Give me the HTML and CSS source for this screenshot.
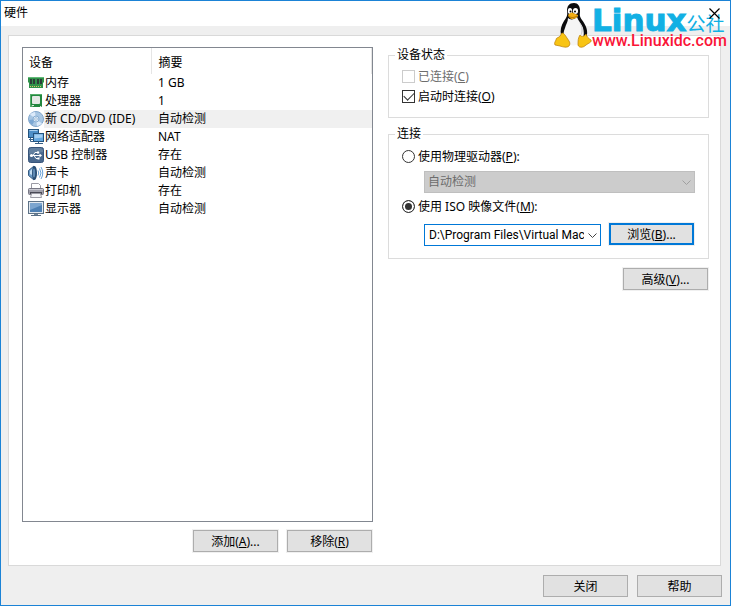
FILE: index.html
```html
<!DOCTYPE html>
<html lang="zh-CN">
<head>
  <meta charset="UTF-8">
  <meta name="viewport" content="width=device-width, initial-scale=1.0">
  <title>硬件</title>
  <link rel="stylesheet" href="styles.css">
</head>
<body>
  <div class="dialog">
    <header class="titlebar">
      <h1>硬件</h1>
      <button type="button" class="close" aria-label="关闭窗口">
        <svg width="11" height="11" viewBox="0 0 11 11"><path d="M.5 .5l10 10M10.5 .5l-10 10" stroke="#000" stroke-width="1.2"/></svg>
      </button>
    </header>

    <main class="panel">
      <section class="devices">
        <div class="list">
          <table>
            <thead>
              <tr><th class="device">设备</th><th>摘要</th></tr>
            </thead>
            <tbody>
              <tr>
                <td><div class="name">
                  <svg width="16" height="16" viewBox="0 0 16 16"><path d="M0 2h16v5l-1 1v5H1V8L0 7z" fill="#2f9149"/><path d="M0 2h16v1H0z" fill="#63b878"/><path d="M2 4h2v5H2zM5 4h2v5H5zM9 4h2v5H9zM12 4h2v5h-2z" fill="#2c3d38"/><path d="M2 11.500h12" stroke="#d9c36a" stroke-dasharray="1 1"/></svg>
                  <span>内存</span></div></td>
                <td>1 GB</td>
              </tr>
              <tr>
                <td><div class="name">
                  <svg width="16" height="16" viewBox="0 0 16 16"><rect x="2" y="1" width="12" height="13" rx="1" fill="#23873f"/><rect x="4" y="3" width="8" height="8" rx="1" fill="#e4e8e4"/><path d="M2.500 13V1.500H14" fill="none" stroke="#54ad68"/><path d="M4 13.500v-1h2M12 13.500h1" stroke="#dcebdc" fill="none"/></svg>
                  <span>处理器</span></div></td>
                <td>1</td>
              </tr>
              <tr class="selected">
                <td><div class="name">
                  <svg width="16" height="16" viewBox="0 0 16 16"><circle cx="8" cy="8" r="7.500" fill="#a9c7e4" stroke="#82a6cc"/><path d="M8 8L2 3.500A7 7 0 0 1 7 1zM8 8l6 4.500A7 7 0 0 1 9 15z" fill="#dceafa"/><path d="M8 8L1 9a7 7 0 0 0 3 5z" fill="#7ba7d4"/><circle cx="8" cy="8" r="3" fill="#d9e8f6" stroke="#88aed3"/><circle cx="8" cy="8" r="1.300" fill="#fff" stroke="#759cc4" stroke-width=".6"/></svg>
                  <span>新 CD/DVD (IDE)</span></div></td>
                <td>自动检测</td>
              </tr>
              <tr>
                <td><div class="name">
                  <svg width="16" height="16" viewBox="0 0 16 16"><rect x=".5" y=".5" width="10" height="8" fill="#4d8fc8" stroke="#24547f"/><path d="M1.500 1.500h8" stroke="#a9d0ef"/><path d="M2.500 9v3.500H6M1 10.500h4" fill="none" stroke="#3c648a"/><rect x="5.500" y="4.500" width="10" height="8" fill="#64a7df" stroke="#24547f"/><path d="M6.500 5.500h8v3l-8 1z" fill="#a3cff2"/><path d="M10.500 13v2M7 14.500h8" stroke="#375f86"/></svg>
                  <span>网络适配器</span></div></td>
                <td>NAT</td>
              </tr>
              <tr>
                <td><div class="name">
                  <svg width="16" height="16" viewBox="0 0 16 16"><rect x=".5" y=".5" width="15" height="15" rx="2" fill="#49688d" stroke="#38557a"/><path d="M1 7V3l2-2h10l2 2v2z" fill="#63809f"/><path d="M3 8.500h9M5 8.500l2-3h3M6 8.500l2 3h2" fill="none" stroke="#fff"/><circle cx="3.500" cy="8.500" r="1.600" fill="#fff"/><circle cx="10" cy="5.500" r="1.200" fill="#fff"/><path d="M9.500 10.500h2v2h-2zM11.500 6.500l2.500 2-2.500 2z" fill="#fff"/></svg>
                  <span>USB 控制器</span></div></td>
                <td>存在</td>
              </tr>
              <tr>
                <td><div class="name">
                  <svg width="16" height="16" viewBox="0 0 16 16"><path d="M.5 5.500L6 1q3 7 0 14L.5 10.500z" fill="#6d9cc8" stroke="#345a80"/><ellipse cx="6.500" cy="8" rx="2.500" ry="7" fill="#284d73"/><ellipse cx="6" cy="8" rx="1.200" ry="4.500" fill="#5f8bb5"/><path d="M2 6l2-2v6l-2-1z" fill="#c5dff3"/><path d="M10 5.500q1.500 2.500 0 5M11.500 3.500q3 4.500 0 9M13 2q3.500 6 0 12" fill="none" stroke="#6ba3d6"/></svg>
                  <span>声卡</span></div></td>
                <td>自动检测</td>
              </tr>
              <tr>
                <td><div class="name">
                  <svg width="16" height="16" viewBox="0 0 16 16"><path d="M3.500 6V.500h7l2 2V6" fill="#fff" stroke="#9b9ba4"/><rect x=".5" y="5.500" width="15" height="6" rx="1" fill="#a1a1ac" stroke="#777784"/><path d="M1 6.500h14" stroke="#cacad2"/><path d="M2 9h12v2H2z" fill="#494955"/><path d="M3.500 10.500h9l1 4h-11z" fill="#f5f5f8" stroke="#9b9ba4"/></svg>
                  <span>打印机</span></div></td>
                <td>存在</td>
              </tr>
              <tr>
                <td><div class="name">
                  <svg width="16" height="16" viewBox="0 0 16 16"><rect x=".5" y=".5" width="15" height="12" fill="#e1e8ef" stroke="#5d7287"/><path d="M2 2h12v9H2z" fill="#4e80b4"/><path d="M2 2h12v2L2 9z" fill="#7ca5cf"/><path d="M6 13h4v1H6z" fill="#70859b"/><path d="M3 14.500h10" stroke="#596f86"/></svg>
                  <span>显示器</span></div></td>
                <td>自动检测</td>
              </tr>
            </tbody>
          </table>
        </div>
        <div class="actions">
          <button type="button" class="btn">添加(<u>A</u>)...</button>
          <button type="button" class="btn">移除(<u>R</u>)</button>
        </div>
      </section>

      <form class="settings">
        <fieldset class="status">
          <legend>设备状态</legend>
          <label class="option disabled"><input type="checkbox" disabled><span>已连接(<u>C</u>)</span></label>
          <label class="option"><input type="checkbox" checked><span>启动时连接(<u>O</u>)</span></label>
        </fieldset>

        <fieldset class="connection">
          <legend>连接</legend>
          <label class="option"><input type="radio" name="source"><span>使用物理驱动器(<u>P</u>):</span></label>
          <div class="combo drive">
            <select aria-label="物理驱动器" disabled><option>自动检测</option></select>
            <svg width="9" height="6" viewBox="0 0 9 6"><path d="M.5 .5l4 4 4-4" fill="none" stroke="#a0a0a0"/></svg>
          </div>
          <label class="option"><input type="radio" name="source" checked><span>使用 ISO 映像文件(<u>M</u>):</span></label>
          <div class="iso">
            <div class="combo path">
              <select aria-label="ISO 映像文件"><option>D:\Program Files\Virtual Mac</option></select>
              <svg width="9" height="6" viewBox="0 0 9 6"><path d="M.5 .5l4 4 4-4" fill="none" stroke="#444"/></svg>
            </div>
            <button type="button" class="btn default">浏览(<u>B</u>)...</button>
          </div>
        </fieldset>
        <button type="button" class="btn advanced">高级(<u>V</u>)...</button>
      </form>
    </main>

    <footer class="footer">
      <button type="button" class="btn">关闭</button>
      <button type="button" class="btn">帮助</button>
    </footer>

    <div class="watermark">
      <svg width="38" height="46" viewBox="0 0 38 46">
        <path d="M20 1c-5 0-7 3-7 8 1 5-1 7-3 10-3 5-4 9-3 14l5 8h17l4-8c1-6-2-11-5-15s-2-6-2-9c0-5-2-8-6-8z" fill="#0b0b0d"/>
        <path d="M14 16c2 2 6 2 9-1 1 4 5 7 6 11 2 7 0 13-4 16-4 2-9 2-12-1-3-4-5-8-2-15 1-4 3-6 3-10z" fill="#f5f5f5"/>
        <path d="M25 20c3 5 3 9 1 15 4-5 4-10-1-15z" fill="#cfcfd3"/>
        <ellipse cx="16" cy="9" rx="2.200" ry="3" fill="#fff"/><ellipse cx="21.500" cy="9" rx="2.600" ry="3" fill="#fff"/>
        <circle cx="16.500" cy="9.500" r="1" fill="#000"/><circle cx="21" cy="9.500" r="1" fill="#000"/>
        <path d="M14 13c2-2 4-3 5-2l5 2c0 3-4 4-6 4s-3-2-4-4z" fill="#f2ad12"/>
        <path d="M14 14c3 2 6 2 9 0" fill="none" stroke="#965f00" stroke-width=".8"/>
        <path d="M8 31c2 0 3 2 5 5 2 3 4 5 2 8-2 2-6 1-9 0l-5-1c-1-2 0-3 1-5 0-2 1-2 3-3s2-4 3-4z" fill="#f8c414" stroke="#b87a05" stroke-width=".7"/>
        <path d="M26 33c1 2 4 2 6-1 1 3 2 4 5 6 1 2-2 3-5 5-3 3-7 3-8 0 0-4 0-7 2-10z" fill="#f8c414" stroke="#b87a05" stroke-width=".7"/>
      </svg>
      <div class="brand">
        <div class="brand-name">Linux<span>公社</span></div>
        <div class="brand-url">www.Linuxidc.com</div>
      </div>
    </div>
  </div>
</body>
</html>
```
FILE: styles.css
```css
* { box-sizing: border-box; }
body { margin: 0; font: 12px/18px "Noto Sans", "Noto Sans CJK SC", sans-serif; color: #000; background: #efefef; }
button, select, input { font: inherit; color: inherit; margin: 0; }

.dialog { position: relative; display: flex; flex-direction: column; min-height: 100vh; border: 1px solid #1b83d6; background: #efefef; }
.titlebar { display: flex; justify-content: space-between; height: 25px; padding: 3px; background: #fff; }
.titlebar h1 { margin: 0; font-size: 12px; font-weight: normal; }
.close { position: relative; z-index: 2; padding: 0 7px; border: 0; background: none; }
.close svg { display: block; }

.panel { flex: 1; display: flex; gap: 15px; margin: 9px 9px 0 7px; padding: 11px 11px 12px 13px; border: 1px solid #d9d9d9; background: #fff; }
.devices { display: flex; flex-direction: column; flex: 0 0 351px; }
.list { flex: 1; border: 1px solid #828790; }
table { width: 100%; border-collapse: collapse; table-layout: fixed; }
th, td { height: 18px; padding: 0 6px; text-align: left; font-weight: normal; line-height: 18px; }
th { height: 26px; padding: 3px 6px 0; border-right: 1px solid #e5e5e5; }
th.device { width: 128px; }
th:last-child, td:last-child { padding-left: 7px; }
td:first-child { padding: 0 0 0 5px; }
.name { display: flex; align-items: center; white-space: nowrap; }
.name span { flex: 1; padding-left: 1px; }
.selected td:last-child, .selected .name span { background: #f0f0f0; }
.actions { display: flex; justify-content: flex-end; gap: 9px; margin-top: 8px; padding: 0 1px 1px 0; }

.btn { width: 85px; height: 22px; padding: 1px 0 0; border: 1px solid #adadad; background: #e1e1e1; line-height: 19px; }
.panel .btn { box-shadow: 0 0 0 1px #f0f0f0; }
.btn.default { margin-bottom: 1px; border: 2px solid #0078d7; line-height: 17px; }

.settings { flex: 1; min-width: 0; }
fieldset { margin: 0 0 9px; min-width: 0; border: 1px solid #dcdcdc; }
legend { padding: 0 2px; margin-left: -7px; line-height: 16px; }
.status { margin-bottom: 8px; padding: 3px 13px 11px; }
.connection { padding: 4px 13px 12px; }
.option { display: flex; align-items: center; height: 20px; line-height: 20px; }
.option span { padding-top: 1px; }
.option input { appearance: none; width: 13px; height: 13px; margin-right: 3px; border: 1px solid #333; background: #fff; }
.option input[type="checkbox"] { display: grid; place-items: center; }
.option input[type="checkbox"]:checked::before { content: ""; width: 9px; height: 5px; margin-top: -3px; border: solid #333; border-width: 0 0 1px 1px; transform: rotate(-45deg); }
.option input[type="radio"] { border-radius: 50%; }
.option input[type="radio"]:checked { background: #333; box-shadow: inset 0 0 0 2px #fff; }
.option.disabled { color: #6d6d6d; }
.option.disabled input { border-color: #ccc; }

.combo { position: relative; flex: 1; min-width: 0; height: 22px; }
.combo select { display: block; appearance: none; width: 100%; height: 22px; padding: 0 16px 0 4px; border: 1px solid #0078d7; border-radius: 0; background: #fff; }
.combo select:disabled { padding-left: 3px; border-color: #bfbfbf; background: #ccc; color: #6d6d6d; opacity: 1; }
.combo svg { position: absolute; right: 4px; top: 9px; pointer-events: none; }
.path select { font-family: Roboto, "Noto Sans CJK SC", sans-serif; }
.drive { margin: 5px 0 3px 22px; }
.iso { display: flex; align-items: flex-end; gap: 8px; margin: 7px 1px 0 22px; }
.advanced { display: block; margin: 0 1px 0 auto; }
.footer { display: flex; justify-content: flex-end; gap: 9px; padding: 9px 8px 8px; }

.watermark { position: absolute; z-index: 1; right: 2px; top: 1px; display: flex; pointer-events: none; }
.brand { width: 136px; white-space: nowrap; }
.brand-name { height: 31px; font: bold 31px/36px "DejaVu Sans", sans-serif; color: #12b0e4; -webkit-text-stroke: 1px #12b0e4; }
.brand-name span { font: 19px/20px "Noto Sans CJK SC", sans-serif; -webkit-text-stroke: 0; }
.brand-url { font: 500 16px/16px Roboto, sans-serif; color: #fa1437; }
```
